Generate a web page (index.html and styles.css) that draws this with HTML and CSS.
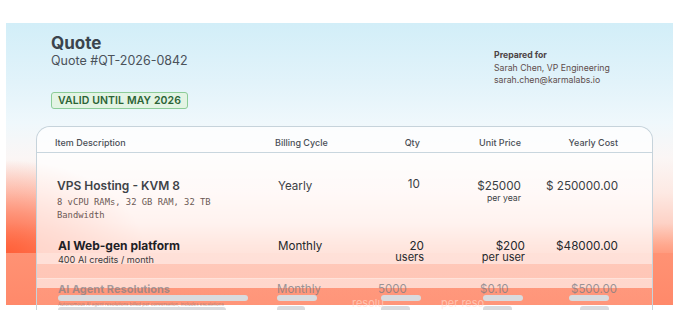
FILE: index.html
```html
<!DOCTYPE html>
<html lang="en">
<head>
<meta charset="utf-8">
<title>Quote</title>
<link rel="stylesheet" href="styles.css">
</head>
<body>
<div class="panel">
  <div class="panel-head">
    <div class="head-left">
      <h1 class="title">Quote</h1>
      <div class="quote-no">Quote #QT-2026-0842</div>
      <span class="badge">VALID UNTIL MAY 2026</span>
    </div>
    <div class="prepared">
      <div class="prepared-label">Prepared for</div>
      <div>Sarah Chen, VP Engineering</div>
      <div>sarah.chen@karmalabs.io</div>
    </div>
  </div>

  <div class="card">
    <div class="card-body">
      <div class="row head">
        <div>Item Description</div>
        <div>Billing Cycle</div>
        <div class="num">Qty</div>
        <div class="num">Unit Price</div>
        <div class="num">Yearly Cost</div>
      </div>
      <div class="row item item-1">
        <div>
          <div class="item-title">VPS Hosting - KVM 8</div>
          <div class="item-mono">8 vCPU RAMs, 32 GB RAM, 32 TB Bandwidth</div>
        </div>
        <div class="cycle">Yearly</div>
        <div class="num val">10</div>
        <div class="num val">$25000<span class="unit small">per year</span></div>
        <div class="num val">$ 250000.00</div>
      </div>
      <div class="row item item-2">
        <div>
          <div class="item-title strong">AI Web-gen platform</div>
          <div class="item-sub">400 AI credits / month</div>
        </div>
        <div class="cycle strong">Monthly</div>
        <div class="num val shift">20<span class="unit">users</span></div>
        <div class="num val shift">$200<span class="unit">per user</span></div>
        <div class="num val">$48000.00</div>
      </div>
    </div>
    <div class="ghost">
      <div class="ghost-row">
        <div class="g-cell">
          <div class="g-text">AI Agent Resolutions</div>
          <span class="bar b-190"></span>
          <div class="g-tiny">Autonomous AI agent resolutions billed per conversation, includes escalations</div>
          <span class="bar b-168"></span>
        </div>
        <div class="g-cell">
          <div class="g-text">Monthly</div>
          <span class="bar b-40"></span>
          <span class="bar b-28"></span>
        </div>
        <div class="g-cell g-qty">
          <div class="g-text">5000</div>
          <div class="g-faint">resolu</div>
          <span class="bar b-40"></span>
          <span class="bar b-29"></span>
        </div>
        <div class="g-cell g-price">
          <div class="g-text">$0.10</div>
          <div class="g-faint">per reso</div>
          <span class="bar b-40"></span>
          <span class="bar b-29"></span>
        </div>
        <div class="g-cell g-total">
          <div class="g-text">$500.00</div>
          <span class="bar b-40"></span>
          <span class="bar b-29 b-right"></span>
        </div>
      </div>
    </div>
  </div>
</div>
</body>
</html>
```

FILE: styles.css
```css
* { box-sizing: border-box; }

html, body {
  margin: 0;
  padding: 0;
  background: #ffffff;
  font-family: Inter, "Noto Sans", "DejaVu Sans", sans-serif;
  overflow: hidden;
  height: 310px;
}

.panel {
  margin: 23px 0 0 6px;
  width: 667px;
  height: 282px;
  background:
    linear-gradient(180deg, rgba(255,141,110,0) 0, rgba(255,141,110,0) 230px, #ff9274 230px, #ff896a 282px),
    radial-gradient(ellipse 140px 95px at 0% 232px, rgba(255,92,52,0.95) 0%, rgba(255,92,52,0.55) 45%, rgba(255,92,52,0) 100%),
    linear-gradient(180deg, #d2eef8 0px, #e2f3fa 60px, #eff8fc 100px, #fbf6f5 135px, #fde9e3 170px, #fdd2c6 200px, #ffa88e 222px, #ff8d6d 240px, #ff896a 282px);
}

.panel-head {
  display: flex;
  justify-content: space-between;
  padding: 10px 0 0 45px;
}

.head-left {
  display: flex;
  flex-direction: column;
  align-items: flex-start;
}

.title {
  margin: 0;
  font-size: 17px;
  line-height: 20px;
  font-weight: 700;
  color: #3b444d;
}

.quote-no {
  font-size: 12.5px;
  line-height: 16px;
  color: #4b525a;
}

.badge {
  margin-top: 23px;
  height: 17px;
  padding: 0 6px;
  display: inline-flex;
  align-items: center;
  border: 1px solid #8ccc98;
  border-radius: 3px;
  background: #e3f4e4;
  color: #2c6336;
  font-size: 10.5px;
  font-weight: 600;
  letter-spacing: 0.1px;
}

.prepared {
  width: 179px;
  margin-top: 16px;
  font-size: 8.7px;
  line-height: 12.5px;
  color: #5e4d4b;
}

.prepared-label {
  font-weight: 700;
  color: #4d4446;
}

.card {
  margin: 17px 0 0 30px;
  width: 617px;
  border: 1px solid #c6d3db;
  border-bottom: none;
  border-radius: 14px 14px 0 0;
}

.card-body {
  background: rgba(255,255,255,0.72);
  border-radius: 13px 13px 0 0;
}

.row {
  display: grid;
  grid-template-columns: 220px 85px 60px 101px 97px;
  padding: 0 34px 0 18px;
}

.num { text-align: right; }

.head {
  height: 26px;
  padding-top: 10px;
  font-size: 9px;
  line-height: 12px;
  font-weight: 500;
  color: #4a4f56;
  border-bottom: 1px solid #c9d6de;
}

.item { color: #3e4348; }

.item-1 { padding-top: 25px; height: 73px; }
.item-2 { padding-top: 12px; height: 38px; }

.item-title {
  font-size: 12px;
  line-height: 16px;
  font-weight: 600;
  padding-left: 2px;
}

.item-title.strong { color: #1d2126; padding-left: 3px; font-weight: 700; }

.item-mono {
  margin-top: 2px;
  padding-left: 2px;
  width: 165px;
  font-family: "DejaVu Sans Mono", "Liberation Mono", monospace;
  font-size: 8.8px;
  line-height: 13px;
  color: #6b5854;
}

.item-sub {
  padding-left: 3px;
  font-size: 9.1px;
  line-height: 12px;
  color: #3a3a3c;
}

.cycle {
  font-size: 11.6px;
  line-height: 16px;
  padding-left: 3px;
  color: #3c4045;
}

.cycle.strong { color: #24272b; }

.val {
  font-size: 11.7px;
  line-height: 16px;
  color: #3b3f44;
}

.item-1 .val:nth-child(3) { line-height: 12px; }

.item-2 .val { color: #25282c; line-height: 11px; padding-top: 3px; }

.unit {
  display: block;
  font-size: 11px;
  line-height: 11px;
}

.unit.small {
  font-size: 8.7px;
  line-height: 9px;
}

.shift { margin-right: -4px; }

.ghost {
  height: 47px;
  background: linear-gradient(180deg,
    rgba(255,255,255,0.50) 0, rgba(255,255,255,0.50) 14px,
    rgba(255,255,255,0.75) 14px, rgba(255,255,255,0.75) 15px,
    rgba(255,255,255,0.65) 15px, rgba(255,255,255,0.65) 24px,
    rgba(255,255,255,0.10) 24px);
}

.ghost-row {
  display: grid;
  grid-template-columns: 219px 101px 102px 91px 60px;
  padding: 17px 0 0 21px;
  font-size: 11.5px;
  line-height: 16px;
}

.g-cell {
  display: flex;
  flex-direction: column;
  align-items: flex-start;
  position: relative;
}

.g-text {
  color: rgba(120,124,132,0.75);
  font-weight: 400;
}

.g-cell:first-child .g-text {
  font-size: 11px;
  font-weight: 700;
  color: rgba(125,128,136,0.7);
}

.g-faint {
  position: absolute;
  top: 15px;
  left: -26px;
  font-size: 11px;
  line-height: 14px;
  color: rgba(255,225,215,0.6);
  white-space: nowrap;
}

.g-price .g-faint { left: -39px; }

.g-tiny {
  width: 171px;
  height: 5px;
  margin-top: 1px;
  overflow: hidden;
  white-space: nowrap;
  font-size: 4.5px;
  line-height: 5px;
  color: rgba(130,110,110,0.6);
}

.bar {
  display: block;
  height: 6px;
  border-radius: 3px;
  background: #d9dbde;
  margin-top: -2px;
  position: relative;
}

.bar + .bar { margin-top: 5px; }
.g-tiny + .bar { margin-top: 0; }

.g-qty .bar, .g-price .bar { margin-left: 3px; }
.g-total .bar { margin-left: -2px; }
.g-total .b-right { margin-left: 9px; }

.b-190 { width: 190px; }
.b-168 { width: 168px; }
.b-40 { width: 40px; }
.b-28 { width: 28px; }
.b-29 { width: 29px; }
```
